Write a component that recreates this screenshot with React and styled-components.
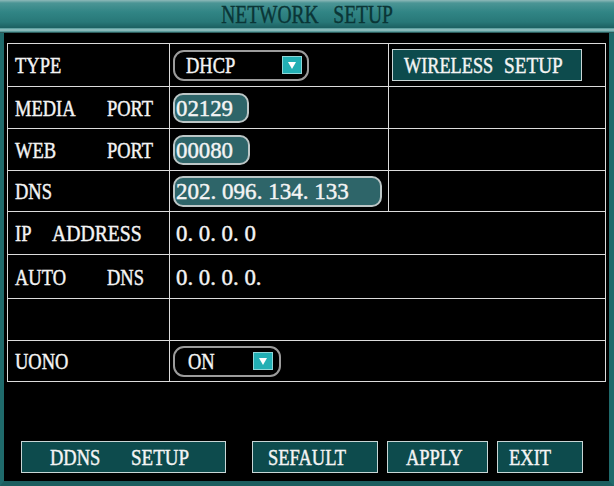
import React from 'react';
import styled, { createGlobalStyle } from 'styled-components';

const Global = createGlobalStyle`
  html, body { margin: 0; padding: 0; background: #000; }
`;

const Screen = styled.div`
  width: 614px;
  height: 486px;
  background: #000;
  display: flex;
  flex-direction: column;
  overflow: hidden;
  color: #f4f4f4;
  font-family: "Liberation Serif", "DejaVu Serif", "Times New Roman", serif;
  font-size: 24px;
  line-height: 1;
`;

const TitleBar = styled.div`
  height: 28px;
  flex: none;
  display: flex;
  align-items: center;
  justify-content: center;
  background: linear-gradient(to bottom, #8fb9b9 0px, #4b9595 3px, #318585 12px, #287878 22px, #1c6061 28px);
`;

const Title = styled.span`
  display: inline-block;
  font-family: "Liberation Serif", "DejaVu Serif", serif;
  font-size: 25px;
  color: #0a3536;
  -webkit-text-stroke: 0.4px #0a3536;
  white-space: pre;
  transform: scaleX(0.78);
`;

const TitleRule = styled.div`
  height: 5px;
  flex: none;
  background: linear-gradient(to bottom, #4e9696 0, #9cc6c6 40%, #5a9c9c 70%, #163c3c 100%);
`;

const Frame = styled.div`
  flex: 1;
  display: flex;
  flex-direction: column;
  border-left: 4px solid #1f6a6b;
  border-right: 5px solid #1f6a6b;
  border-bottom: 5px solid #1c5e5f;
  padding: 10px 3px 8px;
`;

const Table = styled.div`
  display: grid;
  grid-template-columns: 162px 219px 1fr;
  grid-template-rows: 43px 42px 42px 41px 43px 44px 42px 41px;
  border-top: 1px solid #dcdcdc;
  border-left: 1px solid #dcdcdc;
`;

const Cell = styled.div`
  box-sizing: border-box;
  display: flex;
  align-items: center;
  border-right: 1px solid #dcdcdc;
  border-bottom: 1px solid #dcdcdc;
  padding-left: ${p => p.$pl ?? 0}px;
  grid-column: ${p => (p.$span ? `span ${p.$span}` : 'auto')};
  min-width: 0;
`;

const Txt = styled.span`
  display: inline-block;
  font-family: "Liberation Serif", "DejaVu Serif", serif;
  white-space: pre;
  -webkit-text-stroke: 0.45px #f4f4f4;
  transform: scaleX(${p => p.$sx ?? 0.77});
  transform-origin: left center;
`;

const Word = styled.span`
  display: inline-block;
  flex: none;
  width: ${p => p.$w}px;
`;

const Field = styled.div`
  box-sizing: border-box;
  width: ${p => p.$w}px;
  height: ${p => p.$h ?? 30}px;
  margin-left: 3px;
  border: 2px solid #bcc6c6;
  border-radius: 10px;
  background: #2e6569;
  display: flex;
  align-items: center;
  padding-left: 1px;
`;

const Select = styled.div`
  box-sizing: border-box;
  width: ${p => p.$w}px;
  height: 31px;
  margin-left: 3px;
  border: 2px solid #9c9c9c;
  border-radius: 11px;
  background: #000;
  display: flex;
  align-items: center;
  justify-content: space-between;
  padding: 0 ${p => p.$pr}px 0 ${p => p.$pl}px;
`;

const ArrowBox = styled.div`
  box-sizing: border-box;
  width: 20px;
  height: 18px;
  background: #22afb4;
  border: 1px solid #8ed6d8;
  display: flex;
  align-items: center;
  justify-content: center;
`;

const Btn = styled.div`
  box-sizing: border-box;
  flex: none;
  width: ${p => p.$w}px;
  height: 32px;
  margin-left: ${p => p.$ml ?? 0}px;
  background: #0d4b4d;
  border: 1px solid #c9d6d6;
  display: flex;
  align-items: center;
  padding-left: ${p => p.$pl}px;
`;

const ButtonBar = styled.div`
  display: flex;
  margin-top: auto;
  padding-left: 14px;
`;

const Arrow = () => (
  <ArrowBox>
    <svg width="10" height="9" viewBox="0 0 10 9">
      <path d="M1 1 L9 1 L5 8 Z" fill="#ffffff" />
    </svg>
  </ArrowBox>
);

export default function App() {
  return (
    <>
      <Global />
      <Screen>
        <TitleBar>
          <Title>NETWORK   SETUP</Title>
        </TitleBar>
        <TitleRule />
        <Frame>
          <Table>
            <Cell $pl={7}><Txt>TYPE</Txt></Cell>
            <Cell>
              <Select $w={136} $pl={11} $pr={5}>
                <Txt>DHCP</Txt>
                <Arrow />
              </Select>
            </Cell>
            <Cell>
              <Btn $w={190} $ml={3} $pl={11}>
                <Word $w={100}><Txt $sx={0.76}>WIRELESS</Txt></Word><Txt $sx={0.8}>SETUP</Txt>
              </Btn>
            </Cell>

            <Cell $pl={7}><Word $w={92}><Txt>MEDIA</Txt></Word><Txt>PORT</Txt></Cell>
            <Cell><Field $w={76}><Txt $sx={0.95}>02129</Txt></Field></Cell>
            <Cell />

            <Cell $pl={7}><Word $w={92}><Txt>WEB</Txt></Word><Txt>PORT</Txt></Cell>
            <Cell><Field $w={77}><Txt $sx={0.95}>00080</Txt></Field></Cell>
            <Cell />

            <Cell $pl={7}><Txt>DNS</Txt></Cell>
            <Cell><Field $w={209} $h={31}><Txt $sx={0.96}>202. 096. 134. 133</Txt></Field></Cell>
            <Cell />

            <Cell $pl={7}><Word $w={37}><Txt>IP</Txt></Word><Txt $sx={0.82}>ADDRESS</Txt></Cell>
            <Cell $span={2} $pl={6}><Txt $sx={0.95}>0. 0. 0. 0</Txt></Cell>

            <Cell $pl={7}><Word $w={92}><Txt>AUTO</Txt></Word><Txt>DNS</Txt></Cell>
            <Cell $span={2} $pl={6}><Txt $sx={0.95}>0. 0. 0. 0.</Txt></Cell>

            <Cell />
            <Cell $span={2} />

            <Cell $pl={7}><Txt>UONO</Txt></Cell>
            <Cell $span={2}>
              <Select $w={108} $pl={13} $pr={6}>
                <Txt>ON</Txt>
                <Arrow />
              </Select>
            </Cell>
          </Table>
          <ButtonBar>
            <Btn $w={205} $pl={28}><Word $w={81}><Txt>DDNS</Txt></Word><Txt $sx={0.79}>SETUP</Txt></Btn>
            <Btn $w={126} $ml={26} $pl={15}><Txt>SEFAULT</Txt></Btn>
            <Btn $w={101} $ml={9} $pl={18}><Txt>APPLY</Txt></Btn>
            <Btn $w={86} $ml={9} $pl={11}><Txt>EXIT</Txt></Btn>
          </ButtonBar>
        </Frame>
      </Screen>
    </>
  );
}
